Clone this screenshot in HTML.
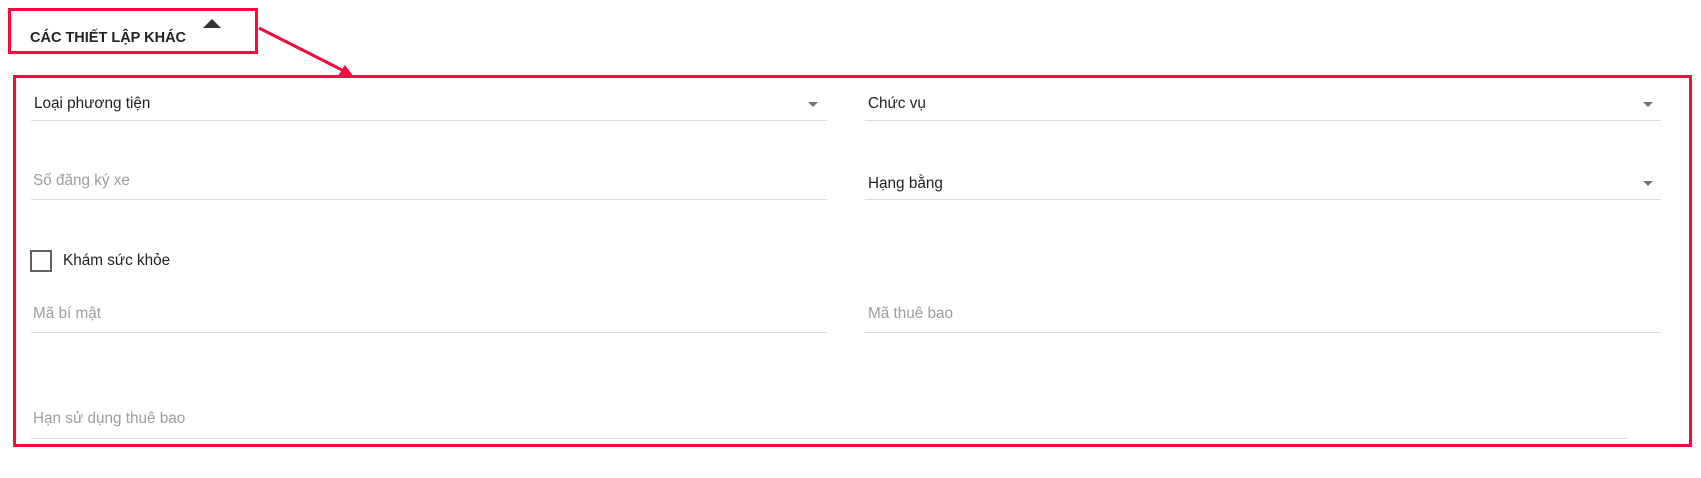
<!DOCTYPE html>
<html><head><meta charset="utf-8"><style>
body{margin:0;width:1701px;height:478px;background:#fff;position:relative;overflow:hidden;font-family:"Liberation Sans",sans-serif;}
.a{position:absolute}
.hb{left:8px;top:8px;width:244px;height:40px;border:3px solid #f5093f}
.mb{left:13px;top:75px;width:1673px;height:366px;border:3px solid #f5093f}
.t{position:absolute;font-size:15.3px;line-height:16px;white-space:nowrap}
.dk{color:#222}.lt{color:#9e9e9e}
.ul{position:absolute;height:1px;background:#dcdcdc}
.dd{position:absolute;width:0;height:0;border-left:5px solid transparent;border-right:5px solid transparent;border-top:5px solid #757575}
</style></head><body>
<div class="a hb"></div>
<div class="t" style="left:30px;top:30px;font-weight:bold;font-size:14.5px;color:#222">CÁC THIẾT LẬP KHÁC</div>
<div class="a" style="left:203px;top:19px;width:0;height:0;border-left:9px solid transparent;border-right:9px solid transparent;border-bottom:9px solid #333"></div>
<svg class="a" style="left:0;top:0" width="1701" height="478"><line x1="259" y1="28" x2="346" y2="72" stroke="#f5093f" stroke-width="3"/><polygon points="354,77 338,76 345,65" fill="#f5093f"/></svg>
<div class="a mb"></div>

<div class="t dk" style="left:34px;top:96px">Loại phương tiện</div>
<div class="dd" style="left:808px;top:102px"></div>
<div class="ul" style="left:31px;top:120px;width:796px"></div>
<div class="t dk" style="left:868px;top:96px">Chức vụ</div>
<div class="dd" style="left:1643px;top:102px"></div>
<div class="ul" style="left:865px;top:120px;width:796px"></div>

<div class="t lt" style="left:33px;top:173px">Số đăng ký xe</div>
<div class="ul" style="left:31px;top:199px;width:796px"></div>
<div class="t dk" style="left:868px;top:176px">Hạng bằng</div>
<div class="dd" style="left:1643px;top:181px"></div>
<div class="ul" style="left:865px;top:199px;width:796px"></div>

<div class="a" style="left:30px;top:250px;width:18px;height:18px;border:2px solid #616161"></div>
<div class="t dk" style="left:63px;top:253px">Khám sức khỏe</div>

<div class="t lt" style="left:33px;top:306px">Mã bí mật</div>
<div class="ul" style="left:31px;top:332px;width:796px"></div>
<div class="t lt" style="left:868px;top:306px">Mã thuê bao</div>
<div class="ul" style="left:865px;top:332px;width:796px"></div>

<div class="t lt" style="left:33px;top:411px">Hạn sử dụng thuê bao</div>
<div class="ul" style="left:31px;top:438px;width:1597px"></div>
</body></html>
